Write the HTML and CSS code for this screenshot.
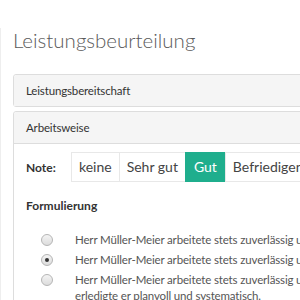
FILE: index.html
```html
<!DOCTYPE html>
<html lang="de">

<head>
    <meta charset="UTF-8">
    <meta name="viewport" content="width=device-width, initial-scale=1.0">
    <title>Leistungsbeurteilung</title>
    <link rel="stylesheet" href="styles.css">
</head>

<body>
    <div class="page">
        <h1 class="title">Leistungsbeurteilung</h1>

        <div class="panel">
            <div class="panel-heading">Leistungsbereitschaft</div>
        </div>

        <div class="panel">
            <div class="panel-heading">Arbeitsweise</div>
            <div class="panel-body">
                <div class="note-row">
                    <span class="note-label">Note:</span>
                    <div class="btn-group">
                        <button class="btn">keine</button>
                        <button class="btn">Sehr gut</button>
                        <button class="btn active">Gut</button>
                        <button class="btn">Befriedigend</button>
                        <button class="btn">Ausreichend</button>
                    </div>
                </div>

                <h4 class="section-title">Formulierung</h4>
                <ul class="options">
                    <li class="option">
                        <input type="radio" name="formulierung" id="f1">
                        <label for="f1">Herr Müller-Meier arbeitete stets zuverlässig und sorgfältig.</label>
                    </li>
                    <li class="option">
                        <input type="radio" name="formulierung" id="f2" checked>
                        <label for="f2">Herr Müller-Meier arbeitete stets zuverlässig und gewissenhaft.</label>
                    </li>
                    <li class="option">
                        <input type="radio" name="formulierung" id="f3">
                        <label for="f3">Herr Müller-Meier arbeitete stets zuverlässig und gewissenhaft, seine Aufgaben erledigte er planvoll und systematisch.</label>
                    </li>
                </ul>
            </div>
        </div>
    </div>
</body>

</html>
```

FILE: styles.css
```css
body {
    margin: 0;
    padding: 1px 0 0 0;
    font-family: Lato, "Open Sans", sans-serif;
    color: #333;
    background-color: #fff;
    overflow: hidden;
}

.page {
    width: 560px;
    padding-left: 12px;
    border-left: 1px solid #eee;
}

.title {
    font-weight: 300;
    font-size: 20.5px;
    color: #5a5a5a;
    margin: 27px 0 22px 0;
    line-height: 24px;
}

.panel {
    border: 1px solid #ddd;
    border-radius: 3px;
    margin-bottom: 4px;
    background-color: #fff;
}

.panel-heading {
    background-color: #f5f5f5;
    padding: 8px 12px;
    font-size: 11.5px;
    letter-spacing: -0.15px;
    line-height: 15px;
    border-radius: 3px 3px 0 0;
}

.panel-body {
    border-top: 1px solid #ddd;
    padding: 8px 12px;
}

.note-row {
    display: flex;
    align-items: center;
}

.note-label {
    width: 45px;
    font-weight: bold;
    font-size: 12px;
}

.btn-group {
    display: flex;
}

.btn {
    font-family: Lato, "Open Sans", sans-serif;
    font-size: 14px;
    color: #444;
    background-color: #fff;
    border: 1px solid #e8e8e8;
    margin-left: -1px;
    padding: 5px 7px;
    line-height: 18px;
}

.btn:first-child {
    margin-left: 0;
}

.btn.active {
    background-color: #1fae8d;
    border-color: #1fae8d;
    color: #fff;
    padding: 5px 8px;
}

.section-title {
    font-size: 12px;
    font-weight: bold;
    line-height: 16px;
    margin: 16px 0 18px 0;
}

.options {
    list-style: none;
    margin: 0;
    padding: 0;
}

.option {
    display: flex;
    align-items: flex-start;
    font-size: 11.5px;
    letter-spacing: -0.15px;
    line-height: 16px;
    margin-bottom: 4px;
    color: #555;
}

.option input {
    appearance: none;
    width: 12px;
    height: 12px;
    margin: 2px 22px 0 15px;
    border: 1px solid #b5b5b5;
    border-radius: 50%;
    background: linear-gradient(#f4f4f4, #dcdcdc);
    flex-shrink: 0;
    position: relative;
}

.option input:checked::after {
    content: "";
    position: absolute;
    top: 3px;
    left: 3px;
    width: 4px;
    height: 4px;
    border-radius: 50%;
    background-color: #333;
}

.option label {
    width: 395px;
}
```
